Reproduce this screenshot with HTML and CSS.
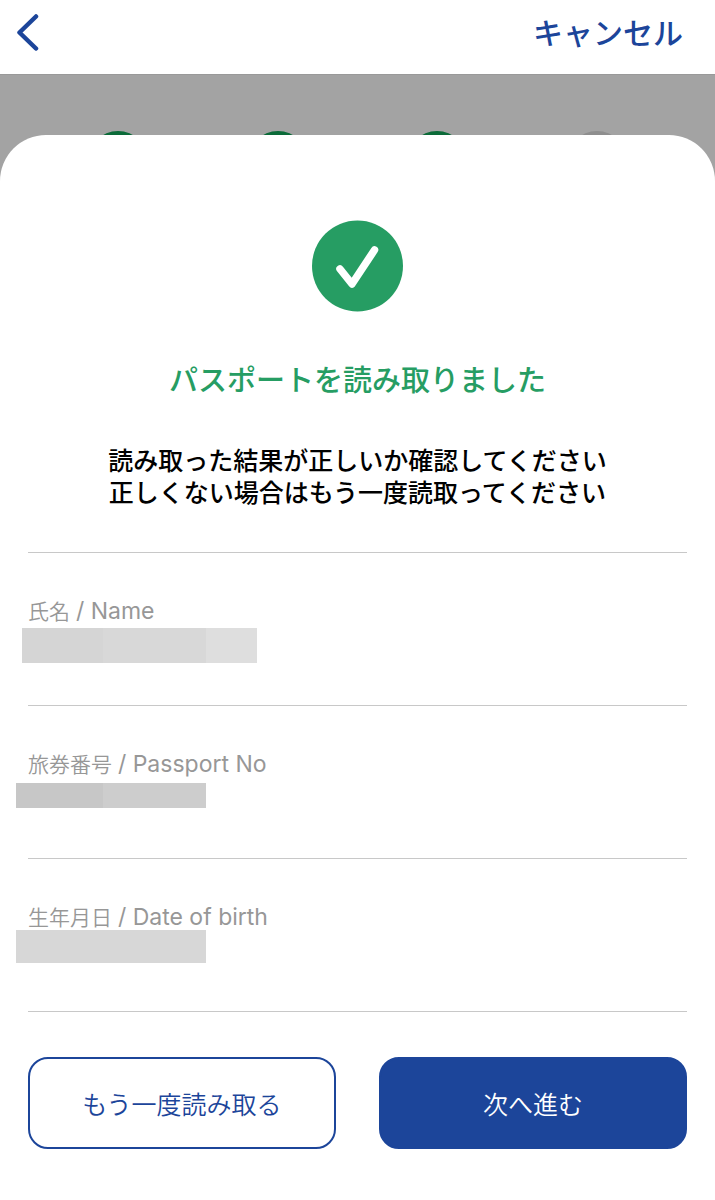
FILE: index.html
```html
<!DOCTYPE html>
<html lang="ja">
<head>
<meta charset="utf-8">
<meta name="viewport" content="width=device-width, initial-scale=1">
<title>パスポートを読み取りました</title>
<link rel="stylesheet" href="styles.css">
</head>
<body>
<div class="page">
  <header class="nav">
    <button class="nav-back" type="button" aria-label="戻る">
      <svg width="24" height="38" viewBox="0 0 24 38" fill="none" stroke="currentColor" stroke-width="4.5" stroke-linecap="round" stroke-linejoin="round"><path d="M21 2.5 4.5 18.5 21 34.5"/></svg>
    </button>
    <button class="nav-cancel" type="button">キャンセル</button>
  </header>

  <div class="steps">
    <span class="step step-done"></span>
    <span class="step step-done"></span>
    <span class="step step-done"></span>
    <span class="step"></span>
  </div>

  <main class="sheet">
    <svg class="badge" viewBox="0 0 92 92" fill="none" aria-hidden="true">
      <circle cx="45.5" cy="46" r="45.5" fill="#269d63"/>
      <path d="M28 49 40 64 62.5 30" stroke="#fff" stroke-width="7.5" stroke-linecap="round" stroke-linejoin="round"/>
    </svg>
    <h1 class="title">パスポートを読み取りました</h1>
    <p class="message">読み取った結果が正しいか確認してください<br>正しくない場合はもう一度読取ってください</p>

    <dl class="fields">
      <div class="field">
        <dt>氏名 <span class="latin">/ Name</span></dt>
        <dd class="mask mask-name"></dd>
      </div>
      <div class="field">
        <dt>旅券番号 <span class="latin">/ Passport No</span></dt>
        <dd class="mask mask-number"></dd>
      </div>
      <div class="field">
        <dt>生年月日 <span class="latin">/ Date of birth</span></dt>
        <dd class="mask mask-birth"></dd>
      </div>
    </dl>

    <div class="actions">
      <button class="btn btn-outline" type="button">もう一度読み取る</button>
      <button class="btn btn-solid" type="button">次へ進む</button>
    </div>
  </main>
</div>
</body>
</html>
```
FILE: styles.css
```css
* {
  box-sizing: border-box;
}

body {
  margin: 0;
  background: #fff;
  color: #000;
  font-family: Inter, "Noto Sans CJK JP", sans-serif;
}

button {
  font-family: inherit;
  cursor: pointer;
}

.page {
  display: flex;
  flex-direction: column;
  min-height: 100vh;
  background: #a3a3a3;
}

.nav {
  display: flex;
  align-items: center;
  justify-content: space-between;
  height: 74px;
  padding: 0 32px 8px 15px;
  background: #fff;
}

.nav-back,
.nav-cancel {
  display: flex;
  padding: 0;
  border: 0;
  background: none;
  color: #1c459a;
}

.nav-cancel {
  font-size: 30px;
  font-weight: 500;
  line-height: 44px;
}

.steps {
  display: grid;
  grid-template-columns: repeat(4, 1fr);
  justify-items: center;
  padding: 56px 38px 0;
  border-top: 1px solid #999;
}

.step {
  width: 60px;
  height: 60px;
  border-radius: 50%;
  background: #8e8e8e;
}

.step-done {
  background: #0b6a38;
}

.sheet {
  position: relative;
  display: flex;
  flex: 1;
  flex-direction: column;
  margin-top: -56px;
  padding: 85px 28px 48px;
  border-radius: 46px 46px 0 0;
  background: #fff;
}

.badge {
  align-self: center;
  width: 92px;
  height: 92px;
}

.title {
  margin: 47px 0 42px;
  color: #269d63;
  font-size: 29px;
  font-weight: 500;
  line-height: 44px;
  text-align: center;
}

.message {
  margin: 0 0 43px;
  font-size: 25px;
  font-weight: 500;
  line-height: 32px;
  text-align: center;
}

.fields {
  margin: 0;
  border-top: 1px solid #c8c8c8;
}

.field {
  height: 153px;
  padding-top: 44px;
  border-bottom: 1px solid #c8c8c8;
}

.field dt {
  color: #979797;
  font-size: 21px;
  font-weight: 350;
  line-height: 28px;
}

.latin {
  font-size: 23px;
  font-weight: 400;
}

.mask {
  background: #d7d7d7;
}

.mask-name {
  width: 235px;
  height: 35px;
  margin: 2px 0 0 -6px;
  background: linear-gradient(90deg, #d5d5d5 81px, #d8d8d8 81px 184px, #dedede 184px);
}

.mask-number {
  width: 190px;
  height: 25px;
  margin: 4px 0 0 -12px;
  background: linear-gradient(90deg, #c7c7c7 87px, #cdcdcd 87px);
}

.mask-birth {
  width: 190px;
  height: 33px;
  margin: -2px 0 0 -12px;
}

.actions {
  display: grid;
  grid-template-columns: 1fr 1fr;
  gap: 43px;
  margin-top: 45px;
}

.btn {
  height: 92px;
  border: 2px solid #1c459a;
  border-radius: 20px;
  font-size: 25px;
  font-weight: 350;
}

.btn-outline {
  background: #fff;
  color: #1c459a;
}

.btn-solid {
  background: #1c459a;
  color: #fff;
}
```
